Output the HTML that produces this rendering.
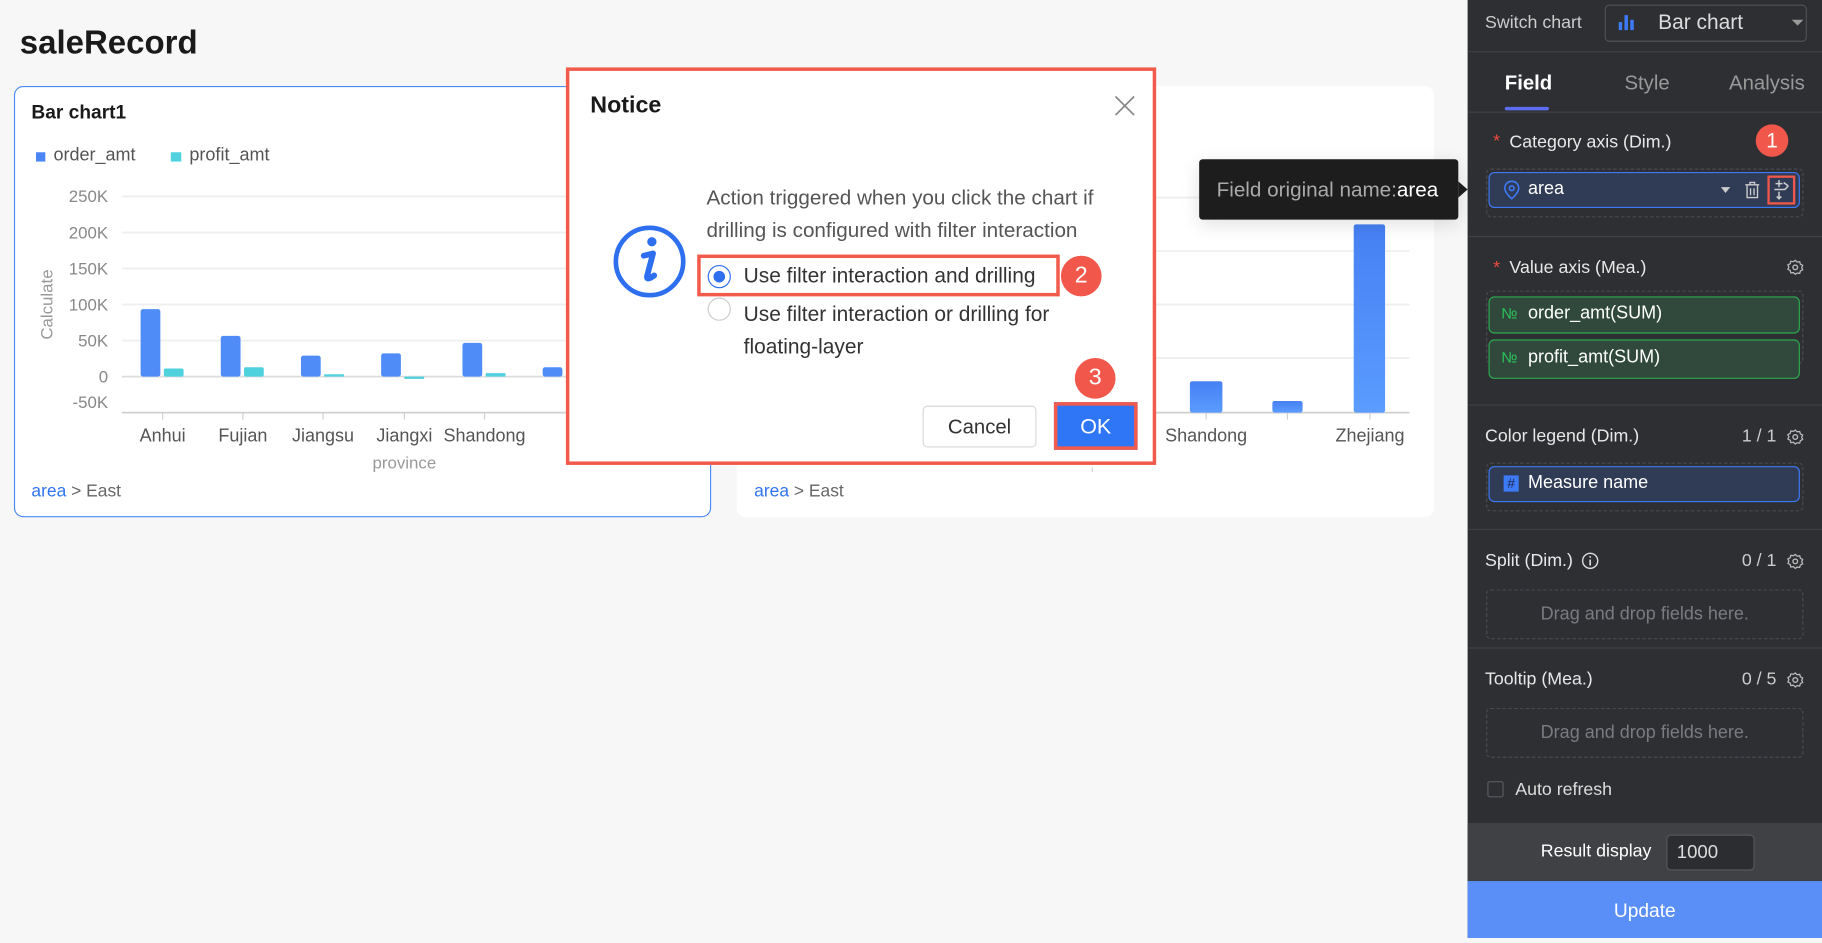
<!DOCTYPE html>
<html><head><meta charset="utf-8"><style>
*{box-sizing:border-box;margin:0;padding:0}
html,body{width:1822px;height:938px;overflow:hidden;background:#f7f7f7;font-family:"Liberation Sans",Arial,sans-serif}
#root{position:absolute;left:0;top:0;width:1568px;height:807px;transform:scale(1.16199,1.16233);transform-origin:0 0;background:#f7f7f7}
.a{position:absolute;white-space:nowrap}
.card{position:absolute;background:#fff;border-radius:8px}
.sb{position:absolute;left:1263px;top:0;width:305px;height:807px;background:#2e2f33;color:#e8e8e8;font-size:15.3px}
.hr{position:absolute;left:0;width:305px;height:1px;background:#414246}
.dash{position:absolute;left:16px;width:273px;border:1px dashed #4a4b50;border-radius:4px}
.pill{position:absolute;left:18px;width:268px;border-radius:5px;color:#fff;font-size:14px}
.badge{position:absolute;border-radius:50%;background:#f1574a;color:#fff;font-size:20px;text-align:center;font-weight:400}
</style></head><body><div id="root">

<div class="a" style="left:17px;top:21px;font-size:28.4px;font-weight:bold;color:#1a1a1a">saleRecord</div>

<!-- left card -->
<div class="card" style="left:12px;top:74px;width:600px;height:371px;border:1px solid #4a8af4"></div>
<div class="a" style="left:27px;top:88px;font-size:16.5px;font-weight:bold;color:#1a1a1a">Bar chart1</div>
<div class="a" style="left:31px;top:131px;width:8px;height:8px;background:#4a84f5"></div>
<div class="a" style="left:46px;top:125px;font-size:15.5px;color:#555">order_amt</div>
<div class="a" style="left:147px;top:131px;width:9px;height:8px;background:#4fd1de"></div>
<div class="a" style="left:163px;top:125px;font-size:15.5px;color:#555">profit_amt</div>
<svg class="a" style="left:0;top:0" width="640" height="450">
 <g stroke="#eeeeee" stroke-width="1.5">
  <line x1="105" y1="169" x2="612" y2="169"/><line x1="105" y1="200" x2="612" y2="200"/>
  <line x1="105" y1="231" x2="612" y2="231"/><line x1="105" y1="262" x2="612" y2="262"/>
  <line x1="105" y1="293" x2="612" y2="293"/>
 </g>
 <line x1="105" y1="324" x2="612" y2="324" stroke="#dcdcdc" stroke-width="1.5"/>
 <line x1="105" y1="355" x2="612" y2="355" stroke="#cfcfcf" stroke-width="1.5"/>
 <g stroke="#cfcfcf"><line x1="140" y1="355" x2="140" y2="361"/><line x1="209" y1="355" x2="209" y2="361"/><line x1="278" y1="355" x2="278" y2="361"/><line x1="348" y1="355" x2="348" y2="361"/><line x1="417" y1="355" x2="417" y2="361"/></g>
 <g fill="#4f8cf8">
  <rect x="121" y="266" width="17" height="58" rx="2"/><rect x="190" y="289" width="17" height="35" rx="2"/>
  <rect x="259" y="306" width="17" height="18" rx="2"/><rect x="328" y="304" width="17" height="20" rx="2"/>
  <rect x="398" y="295" width="17" height="29" rx="2"/><rect x="467" y="316" width="17" height="8" rx="2"/>
 </g>
 <g fill="#4fd1de">
  <rect x="141" y="317" width="17" height="7" rx="1.5"/><rect x="210" y="316" width="17" height="8" rx="1.5"/>
  <rect x="279" y="322" width="17" height="2"/><rect x="348" y="324" width="17" height="2"/>
  <rect x="418" y="321" width="17" height="3"/>
 </g>
 <g font-family="Liberation Sans,Arial,sans-serif" font-size="14.5" fill="#888" text-anchor="end">
  <text x="93" y="174">250K</text><text x="93" y="205">200K</text><text x="93" y="236">150K</text>
  <text x="93" y="267">100K</text><text x="93" y="298">50K</text><text x="93" y="329">0</text><text x="93" y="351">-50K</text>
 </g>
 <text transform="translate(45,262) rotate(-90)" text-anchor="middle" font-family="Liberation Sans,Arial,sans-serif" font-size="14.5" fill="#999">Calculate</text>
 <g font-family="Liberation Sans,Arial,sans-serif" font-size="15.5" fill="#555" text-anchor="middle">
  <text x="140" y="380">Anhui</text><text x="209" y="380">Fujian</text><text x="278" y="380">Jiangsu</text><text x="348" y="380">Jiangxi</text><text x="417" y="380">Shandong</text>
 </g>
 <text x="348" y="403" text-anchor="middle" font-family="Liberation Sans,Arial,sans-serif" font-size="14.5" fill="#999">province</text>
</svg>
<div class="a" style="left:27px;top:414px;font-size:15px;color:#666"><span style="color:#2f74f0">area</span> &gt; East</div>

<!-- right card -->
<div class="card" style="left:634px;top:74px;width:600px;height:371px"></div>
<svg class="a" style="left:600px;top:0" width="640" height="450">
 <g stroke="#eeeeee" stroke-width="1.5">
  <line x1="0" y1="170" x2="613" y2="170"/><line x1="0" y1="216" x2="613" y2="216"/><line x1="0" y1="262" x2="613" y2="262"/><line x1="0" y1="308" x2="613" y2="308"/>
 </g>
 <line x1="0" y1="355" x2="613" y2="355" stroke="#cfcfcf" stroke-width="1.5"/>
 <g stroke="#cfcfcf"><line x1="438" y1="355" x2="438" y2="361"/><line x1="508" y1="355" x2="508" y2="361"/><line x1="579" y1="355" x2="579" y2="361"/><line x1="340" y1="402" x2="340" y2="406"/></g>
 <defs><linearGradient id="g" x1="0" y1="0" x2="0" y2="1"><stop offset="0" stop-color="#4680f3"/><stop offset="1" stop-color="#5a9cff"/></linearGradient></defs>
 <rect x="424" y="328" width="28" height="27" rx="2" fill="url(#g)"/>
 <rect x="495" y="345" width="26" height="10" rx="2" fill="url(#g)"/>
 <rect x="565" y="193" width="27" height="162" rx="2" fill="url(#g)"/>
 <g font-family="Liberation Sans,Arial,sans-serif" font-size="15.5" fill="#555" text-anchor="middle">
  <text x="438" y="380">Shandong</text><text x="579" y="380">Zhejiang</text>
 </g>
</svg>
<div class="a" style="left:649px;top:414px;font-size:15px;color:#666"><span style="color:#2f74f0">area</span> &gt; East</div>

<!-- tooltip -->
<div class="a" style="left:1032px;top:137px;width:223px;height:52px;background:#1d1d1d;border-radius:3px;box-shadow:0 4px 16px rgba(0,0,0,.12)"></div>
<div class="a" style="left:1255px;top:156px;width:0;height:0;border-top:7px solid transparent;border-bottom:7px solid transparent;border-left:8px solid #1d1d1d"></div>
<div class="a" style="left:1047px;top:153px;font-size:17.8px;color:#aaa">Field original name:<span style="color:#fff">area</span></div>

<!-- dialog -->
<div class="a" style="left:487px;top:58px;width:508px;height:342px;border:3px solid #f25a4b;background:#fff"></div>
<div class="a" style="left:508px;top:80px;font-size:20px;font-weight:bold;color:#1a1a1a">Notice</div>
<svg class="a" style="left:959px;top:82px" width="18" height="18"><path d="M1 1L17 17M17 1L1 17" stroke="#888" stroke-width="1.5"/></svg>
<svg class="a" style="left:526px;top:192px" width="66" height="66"><circle cx="33" cy="33" r="29" fill="none" stroke="#2e6ff0" stroke-width="4"/><circle cx="35" cy="16" r="4" fill="#2e6ff0"/><path d="M28 28 L36 26 L31 45 Q30 49 34 47 L37 45" fill="none" stroke="#2e6ff0" stroke-width="5" stroke-linecap="round" stroke-linejoin="round"/></svg>
<div class="a" style="left:608px;top:156px;font-size:17.8px;color:#555;line-height:28px">Action triggered when you click the chart if<br>drilling is configured with filter interaction</div>
<div class="a" style="left:600px;top:219px;width:312px;height:36px;border:3px solid #f25a4b"></div>
<div class="a" style="left:609px;top:228px;width:20px;height:20px;border-radius:50%;border:1px solid #2e6ff0"></div>
<div class="a" style="left:614px;top:233px;width:10px;height:10px;border-radius:50%;background:#2e6ff0"></div>
<div class="a" style="left:640px;top:227px;font-size:18px;color:#333">Use filter interaction and drilling</div>
<div class="a" style="left:609px;top:256px;width:20px;height:20px;border-radius:50%;border:1px solid #ccc"></div>
<div class="a" style="left:640px;top:256px;font-size:18px;color:#333;line-height:28px">Use filter interaction or drilling for<br>floating-layer</div>
<div class="badge" style="left:913px;top:220px;width:35px;height:35px;line-height:35px">2</div>
<div class="badge" style="left:925px;top:308px;width:35px;height:35px;line-height:35px">3</div>
<div class="a" style="left:794px;top:349px;width:98px;height:36px;border:1px solid #d9d9d9;border-radius:4px;text-align:center;line-height:34px;font-size:17.5px;color:#333">Cancel</div>
<div class="a" style="left:907px;top:346px;width:72px;height:41px;border:3px solid #f25a4b;background:#2f76f7;text-align:center;line-height:35px;font-size:18.5px;color:#fff">OK</div>

<!-- sidebar -->
<div class="sb">
 <div class="a" style="left:15px;top:11px;color:#ccc">Switch chart</div>
 <div class="a" style="left:118px;top:4px;width:174px;height:32px;border:1px solid #505156;border-radius:4px"></div>
 <svg class="a" style="left:130px;top:12px" width="16" height="14"><rect x="0" y="7" width="3" height="7" fill="#3d7af5"/><rect x="5" y="1" width="3" height="13" fill="#3d7af5"/><rect x="10" y="5" width="3" height="9" fill="#3d7af5"/></svg>
 <div class="a" style="left:164px;top:9px;font-size:18px;color:#ddd">Bar chart</div>
 <div class="a" style="left:279px;top:17px;border-left:5px solid transparent;border-right:5px solid transparent;border-top:5px solid #999"></div>
 <div class="hr" style="top:44px"></div>
 <div class="a" style="left:32px;top:61px;font-size:17.5px;color:#fff;font-weight:bold">Field</div>
 <div class="a" style="left:135px;top:61px;font-size:17.5px;color:#999">Style</div>
 <div class="a" style="left:225px;top:61px;font-size:17.5px;color:#999">Analysis</div>
 <div class="a" style="left:32px;top:92px;width:38px;height:3px;background:#5b6df0;border-radius:2px"></div>
 <div class="hr" style="top:96px"></div>

 <div class="a" style="left:22px;top:113px;color:#f04a3d">*</div>
 <div class="a" style="left:36px;top:114px">Category axis (Dim.)</div>
 <div class="badge" style="left:248px;top:107px;width:28px;height:28px;line-height:28px;font-size:18px">1</div>
 <div class="dash" style="top:145px;height:42px"></div>
 <div class="pill" style="top:148px;height:31px;background:#303b55;border:1px solid #3d7af5"></div>
 <svg class="a" style="left:31px;top:155px" width="14" height="17"><path d="M7 1C3.5 1 1 3.6 1 7c0 4 6 9 6 9s6-5 6-9c0-3.4-2.5-6-6-6z" fill="none" stroke="#3d7af5" stroke-width="1.4"/><circle cx="7" cy="7" r="2" fill="none" stroke="#3d7af5" stroke-width="1.4"/></svg>
 <div class="a" style="left:52px;top:154px;color:#fff;font-size:15.5px">area</div>
 <div class="a" style="left:218px;top:161px;border-left:4.5px solid transparent;border-right:4.5px solid transparent;border-top:5px solid #ccc"></div>
 <svg class="a" style="left:238px;top:155px" width="14" height="17"><path d="M1 4h12M5 4V2h4v2M2.5 4v11h9V4M5.5 7v6M8.5 7v6" fill="none" stroke="#ccc" stroke-width="1.2"/></svg>
 <div class="a" style="left:258px;top:151px;width:24px;height:25px;border:2px solid #f1574a"></div>
 <svg class="a" style="left:261px;top:154px" width="18" height="19"><path d="M7 1v6M4 4h6M3 9h9l3-3M7 11v6M5 15l2 2 2-2M11 3l4 3" fill="none" stroke="#ccc" stroke-width="1.3"/></svg>
 <div class="hr" style="top:203px"></div>

 <div class="a" style="left:22px;top:222px;color:#f04a3d">*</div>
 <div class="a" style="left:36px;top:222px">Value axis (Mea.)</div>
 <svg class="a" style="left:275px;top:223px" width="14" height="14"><circle cx="7" cy="7" r="2" fill="none" stroke="#bbb" stroke-width="1.2"/><path d="M7 1l1.6 1.5 2.2-.3.6 2.1 2 1-.9 1.9.9 1.9-2 1-.6 2.1-2.2-.3L7 13l-1.6-1.5-2.2.3-.6-2.1-2-1 .9-1.9-.9-1.9 2-1 .6-2.1 2.2.3z" fill="none" stroke="#bbb" stroke-width="1.1"/></svg>
 <div class="dash" style="top:250px;height:63px"></div>
 <div class="pill" style="top:255px;height:32px;background:#30493c;border:1px solid #2bab4e"></div>
 <div class="a" style="left:29px;top:262px;color:#2bc35a;font-size:13px">№</div>
 <div class="a" style="left:52px;top:261px;color:#fff;font-size:15.5px">order_amt(SUM)</div>
 <div class="pill" style="top:292px;height:34px;background:#30493c;border:1px solid #2bab4e"></div>
 <div class="a" style="left:29px;top:300px;color:#2bc35a;font-size:13px">№</div>
 <div class="a" style="left:52px;top:299px;color:#fff;font-size:15.5px">profit_amt(SUM)</div>
 <div class="hr" style="top:348px"></div>

 <div class="a" style="left:15px;top:367px">Color legend (Dim.)</div>
 <div class="a" style="left:236px;top:367px;color:#ccc">1 / 1</div>
 <svg class="a" style="left:275px;top:369px" width="14" height="14"><circle cx="7" cy="7" r="2" fill="none" stroke="#bbb" stroke-width="1.2"/><path d="M7 1l1.6 1.5 2.2-.3.6 2.1 2 1-.9 1.9.9 1.9-2 1-.6 2.1-2.2-.3L7 13l-1.6-1.5-2.2.3-.6-2.1-2-1 .9-1.9-.9-1.9 2-1 .6-2.1 2.2.3z" fill="none" stroke="#bbb" stroke-width="1.1"/></svg>
 <div class="dash" style="top:398px;height:42px"></div>
 <div class="pill" style="top:401px;height:31px;background:#303b55;border:1px solid #3d7af5"></div>
 <div class="a" style="left:31px;top:409px;width:13px;height:14px;background:#3d7af5;color:#1d2a55;font-size:12px;line-height:14px;text-align:center">#</div>
 <div class="a" style="left:52px;top:407px;color:#fff;font-size:15.5px">Measure name</div>
 <div class="hr" style="top:455px"></div>

 <div class="a" style="left:15px;top:474px">Split (Dim.)</div>
 <svg class="a" style="left:98px;top:475px" width="15" height="15"><circle cx="7.5" cy="7.5" r="6.5" fill="none" stroke="#ddd" stroke-width="1.2"/><path d="M7.5 6.5v5M7.5 3.5v1.3" stroke="#ddd" stroke-width="1.4"/></svg>
 <div class="a" style="left:236px;top:474px;color:#ccc">0 / 1</div>
 <svg class="a" style="left:275px;top:476px" width="14" height="14"><circle cx="7" cy="7" r="2" fill="none" stroke="#bbb" stroke-width="1.2"/><path d="M7 1l1.6 1.5 2.2-.3.6 2.1 2 1-.9 1.9.9 1.9-2 1-.6 2.1-2.2-.3L7 13l-1.6-1.5-2.2.3-.6-2.1-2-1 .9-1.9-.9-1.9 2-1 .6-2.1 2.2.3z" fill="none" stroke="#bbb" stroke-width="1.1"/></svg>
 <div class="dash" style="top:507px;height:43px;text-align:center;line-height:41px;color:#7a7b80;font-size:15.5px">Drag and drop fields here.</div>
 <div class="hr" style="top:557px"></div>

 <div class="a" style="left:15px;top:576px">Tooltip (Mea.)</div>
 <div class="a" style="left:236px;top:576px;color:#ccc">0 / 5</div>
 <svg class="a" style="left:275px;top:578px" width="14" height="14"><circle cx="7" cy="7" r="2" fill="none" stroke="#bbb" stroke-width="1.2"/><path d="M7 1l1.6 1.5 2.2-.3.6 2.1 2 1-.9 1.9.9 1.9-2 1-.6 2.1-2.2-.3L7 13l-1.6-1.5-2.2.3-.6-2.1-2-1 .9-1.9-.9-1.9 2-1 .6-2.1 2.2.3z" fill="none" stroke="#bbb" stroke-width="1.1"/></svg>
 <div class="dash" style="top:609px;height:43px;text-align:center;line-height:41px;color:#7a7b80;font-size:15.5px">Drag and drop fields here.</div>

 <div class="a" style="left:17px;top:672px;width:14px;height:14px;border:1px solid #5a5b60;border-radius:2px"></div>
 <div class="a" style="left:41px;top:671px;color:#ddd">Auto refresh</div>

 <div class="a" style="left:0;top:708px;width:305px;height:50px;background:#404145"></div>
 <div class="a" style="left:63px;top:724px;color:#fff">Result display</div>
 <div class="a" style="left:171px;top:718px;width:76px;height:31px;background:#2c2d31;border:1px solid #55565b;border-radius:4px;color:#ddd;padding-left:8px;line-height:29px;font-size:16px">1000</div>
 <div class="a" style="left:0;top:758px;width:305px;height:49px;background:#5a8ff8;text-align:center;line-height:53px;color:#fff;font-size:16.5px">Update</div>
</div>

</div></body></html>
